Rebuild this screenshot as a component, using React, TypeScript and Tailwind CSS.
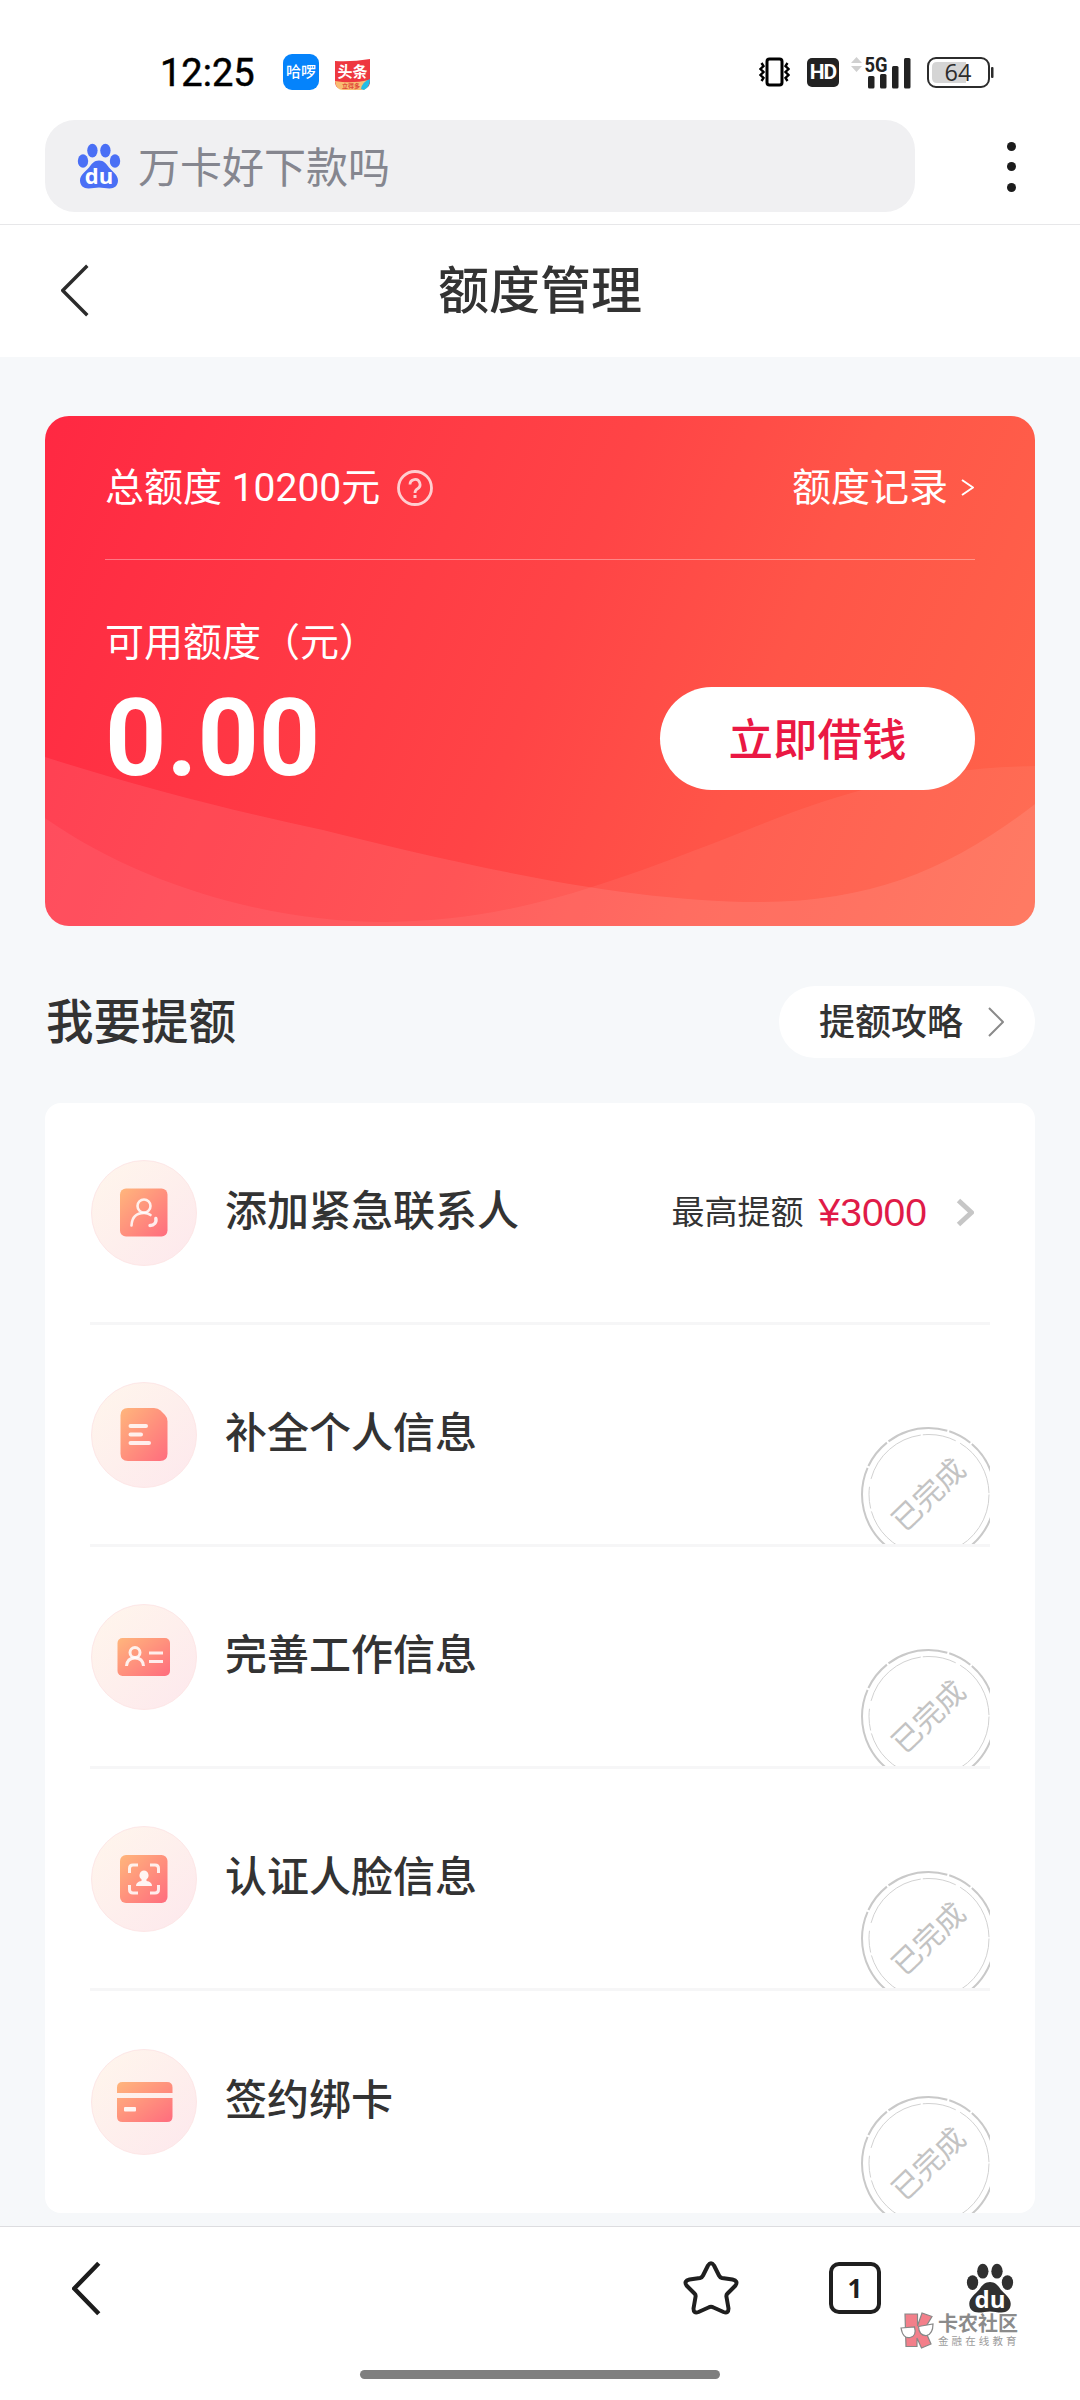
import type { ReactNode } from 'react';

function Paw({ size, color }: { size: number; color: string }) {
  return (
    <svg width={size} height={size} viewBox="0 0 44 44" className="shrink-0 overflow-visible">
      <g fill={color}>
        <ellipse cx="6" cy="17" rx="5.2" ry="6.8" />
        <ellipse cx="15.4" cy="6.6" rx="5.2" ry="6.8" />
        <ellipse cx="28.4" cy="6.6" rx="5.2" ry="6.8" />
        <ellipse cx="38" cy="17" rx="5.2" ry="6.8" />
        <path d="M22 16.500c5 0 7.500 3.500 10 7 3.500 4 9 7.500 9 13 0 5-3.500 8-8.500 8-4 0-7-1-10.500-1s-6.500 1-10.500 1c-5 0-8.500-3-8.500-8 0-5.500 5.500-9 9-13 2.500-3.500 5-7 10-7z" />
      </g>
      <text x="22" y="40" textAnchor="middle" fontSize="22" fontWeight="700" fill="#fff" fontFamily="Open Sans, sans-serif">
        du
      </text>
    </svg>
  );
}

function Chevron({ w, h, stroke, className, left }: { w: number; h: number; stroke: number; className?: string; left?: boolean }) {
  const p = stroke / 2;
  const points = left ? `${w - p},${p} ${p},${h / 2} ${w - p},${h - p}` : `${p},${p} ${w - p},${h / 2} ${p},${h - p}`;
  return (
    <svg width={w} height={h} className={className}>
      <polyline points={points} fill="none" stroke="currentColor" strokeWidth={stroke} strokeLinejoin="round" />
    </svg>
  );
}

function StatusBar() {
  return (
    <div className="flex h-[120px] items-center pl-[160px] pr-[86px] pt-6">
      <span className="w-[123px] pt-0.5 text-[38px] leading-none text-black [-webkit-text-stroke:0.5px_#000]">12:25</span>
      <span className="flex h-9 w-9 items-center justify-center whitespace-nowrap rounded-[9px] bg-[#0583fb] text-[15px] font-medium leading-none text-white">
        哈啰
      </span>
      <svg width="37" height="32" viewBox="0 0 37 32" className="ml-[15px] mt-[5px]">
        <path d="M1 2Q18 3 36 0V24Q35 30 27 30H9Q2 30 1 24z" fill="#ee3840" />
        <path d="M1 22Q18 25 35 21Q35 31 27 31H9Q2 31 1 22z" fill="#f8bd72" />
        <path d="M27 30Q28 23 36 20Q36 28 30 31z" fill="#22bde6" />
        <text x="18.500" y="18" textAnchor="middle" fontSize="15" fontWeight="700" fill="#fff">
          头条
        </text>
        <text x="17" y="29" textAnchor="middle" fontSize="6" fontWeight="700" fill="#e0483a">
          立得多
        </text>
      </svg>

      <svg width="31" height="30" viewBox="0 0 31 30" className="ml-auto" fill="none" stroke="#000">
        <rect x="8" y="2" width="15" height="26" rx="2.500" strokeWidth="3" />
        <path d="M2.500 6l2 3-3 3 3 3-3 3 3 3-2 3M28.500 6l-2 3 3 3-3 3 3 3-3 3 2 3" strokeWidth="2.400" />
      </svg>
      <span className="ml-[17px] flex h-[29px] w-8 items-center justify-center rounded-[5px] bg-[#222] font-['Roboto'] text-[21px] font-bold leading-none tracking-[-1px] text-white">
        HD
      </span>
      <svg width="61" height="33" viewBox="0 0 61 33" className="ml-3 overflow-visible">
        <path d="M0 6l5.500-6 5.500 6zM0 9h11l-5.500 6z" fill="#d0d0d0" transform="translate(0 1)" />
        <text x="13.500" y="15.500" fontSize="21" fontWeight="700" fill="#222" textLength="23" lengthAdjust="spacingAndGlyphs" fontFamily="Roboto">
          5G
        </text>
        <g fill="#222">
          <rect x="17" y="20" width="6.500" height="12.500" rx="1.500" />
          <rect x="29" y="18" width="6.500" height="14.500" rx="1.500" />
          <rect x="41" y="10" width="6.500" height="22.500" rx="1.500" />
          <rect x="53" y="2" width="6.500" height="30.500" rx="1.500" />
        </g>
      </svg>
      <svg width="67" height="31" viewBox="0 0 67 31" className="ml-[15px] overflow-visible">
        <rect x="1" y="1" width="61" height="29" rx="8" fill="#fff" stroke="#2c2c2c" strokeWidth="2" />
        <path d="M10 5H39V26H10Q5 26 5 21V10Q5 5 10 5z" fill="#d5d5d5" />
        <rect x="64" y="10" width="2.500" height="11" rx="1" fill="#2c2c2c" />
        <text x="31" y="24" textAnchor="middle" fontSize="23.500" fill="#2c2c2c" fontFamily="Open Sans">
          64
        </text>
      </svg>
    </div>
  );
}

function SearchBar() {
  return (
    <div className="flex h-[105px] items-start border-b border-[#e7e7e9] pl-[45px]">
      <div className="flex h-[92px] w-[870px] items-center rounded-[30px] bg-[#f0f0f2] pl-8">
        <Paw size={44} color="#4a6ff5" />
        <span className="ml-[17px] pt-1.5 text-[42px] leading-none text-[#85868f]">万卡好下款吗</span>
      </div>
      <div className="ml-[92px] flex flex-col gap-[11.5px] pt-[21.5px]">
        <i className="h-[9px] w-[9px] rounded-full bg-[#1c1c1c]" />
        <i className="h-[9px] w-[9px] rounded-full bg-[#1c1c1c]" />
        <i className="h-[9px] w-[9px] rounded-full bg-[#1c1c1c]" />
      </div>
    </div>
  );
}

function QuotaCard() {
  return (
    <section className="relative h-[510px] overflow-hidden rounded-[24px] bg-[linear-gradient(112deg,#ff2842_0%,#ff4446_50%,#ff5548_70%,#ff654a_100%)] px-[60px] text-white">
      <svg width="990" height="510" className="absolute left-0 top-0" fill="#fff" fillOpacity="0.09">
        <path d="M0 341C100 373 190 395 278 414C400 444 570 486 715 486C830 486 910 450 990 388V510H0z" />
        <path d="M0 402C100 472 230 506 340 506C460 504 540 478 702 414C800 374 880 352 990 350V510H0z" fillOpacity="0.06" />
      </svg>
      <div className="relative flex h-36 items-center border-b border-white/35 text-[39px] leading-none">
        <span className="pt-0.5">总额度 10200元</span>
        <svg width="38" height="38" viewBox="0 0 38 38" className="ml-4" fill="none" stroke="#fff" strokeWidth="2.800" opacity="0.75">
          <circle cx="19" cy="19" r="16.500" />
          <path d="M14 15.500a5 5 0 1 1 7.300 4.400C19.500 21 19 21.800 19 24" />
          <path d="M19 26v3" strokeWidth="3" />
        </svg>
        <span className="ml-auto pt-0.5">额度记录</span>
        <Chevron w={13} h={17} stroke={2} className="ml-[13px] mr-px" />
      </div>
      <div className="relative flex justify-between">
        <div className="pt-[64px]">
          <div className="text-[39px] leading-none">可用额度（元）</div>
          <div className="mt-[22px] text-[107px] font-bold leading-[108px]">0.00</div>
        </div>
        <button className="mt-[127px] h-[103px] w-[315px] rounded-full bg-white pt-[5px] text-[44.5px] font-medium leading-none text-[#ea1843]">
          立即借钱
        </button>
      </div>
    </section>
  );
}

function Badge({ children }: { children: ReactNode }) {
  return (
    <svg width="110" height="110" viewBox="0 0 110 110" className="-ml-px shrink-0">
      <circle cx="55" cy="55" r="52.500" fill="url(#badge-bg)" stroke="#fde7e7" />
      {children}
    </svg>
  );
}

const line = { fill: 'none', stroke: '#fff', strokeOpacity: 0.85, strokeWidth: 3 };

const items: { title: string; bonus?: string; icon: ReactNode }[] = [
  {
    title: '添加紧急联系人',
    bonus: '¥3000',
    icon: (
      <>
        <rect x="31" y="30.500" width="47.500" height="48" rx="6" fill="url(#badge-fg)" />
        <g {...line} strokeWidth="2.600" strokeLinecap="round">
          <circle cx="55" cy="48" r="6.500" />
          <path d="M42.500 67.500C43 58.500 48 55 55 55c2.600 0 4.800.6 6.500 2" />
          <path d="M66.800 60.500c1 4-1.800 7-5.800 7" strokeWidth="3.400" />
        </g>
      </>
    ),
  },
  {
    title: '补全个人信息',
    icon: (
      <>
        <path d="M39 28H65Q69 28 71.500 30.500L76 35Q78.500 37.500 78.500 41.500V73.500Q78.500 81 71 81H39Q31.500 81 31.500 73.500V35.500Q31.500 28 39 28z" fill="url(#badge-fg)" />
        <path d="M41.500 46H57M41.500 54.500H52M41.500 63H60" {...line} strokeWidth="4" strokeLinecap="round" />
      </>
    ),
  },
  {
    title: '完善工作信息',
    icon: (
      <>
        <rect x="28.500" y="36" width="52.500" height="38" rx="5" fill="url(#badge-fg)" />
        <g {...line}>
          <circle cx="46" cy="50.500" r="5" />
          <path d="M37.500 64C38 58 41.500 56 46 56s8 2 8.500 8M60 51h14M60 59.500h14" />
        </g>
      </>
    ),
  },
  {
    title: '认证人脸信息',
    icon: (
      <>
        <rect x="31" y="31" width="47.500" height="48" rx="6" fill="url(#badge-fg)" />
        <path d="M40.500 49V44.500Q40.500 41 44 41H49M61 41h5Q69.500 41 69.500 44.500V49M69.500 61v4.500Q69.500 69 66 69H61M49 69H44Q40.500 69 40.500 65.500V61" {...line} />
        <path d="M55 46.500a4.800 4.800 0 0 1 2.500 8.700v1.800q5.500.8 5.500 5H47q0-4.200 5.500-5v-1.800A4.800 4.800 0 0 1 55 46.500z" fill="#fff" fillOpacity="0.9" />
      </>
    ),
  },
  {
    title: '签约绑卡',
    icon: (
      <>
        <path d="M28 46V40.500Q28 35 33.500 35H78Q83.500 35 83.500 40.500V46zM28 51H83.500V69.500Q83.500 75 78 75H33.500Q28 75 28 69.500z" fill="url(#badge-fg)" />
        <rect x="35" y="60" width="12" height="4.500" rx="1" fill="#fff" fillOpacity="0.9" />
      </>
    ),
  },
];

// "done" seal, cut off by the right and bottom edges of its row
function Stamp() {
  return (
    <svg width="129" height="117" viewBox="0 0 129 117" className="self-end">
      <circle cx="67.500" cy="67.500" r="66.500" fill="none" stroke="#c9c9c9" strokeWidth="2" strokeDasharray="62 2 24 2 41 4 8 3 90 2 30 2" />
      <circle cx="68" cy="67.500" r="60" fill="none" stroke="#d2d2d2" strokeWidth="1" strokeDasharray="70 2 34 5 60 3 22 8" />
      <text x="67" y="78" textAnchor="middle" fontSize="29.500" fill="#c3c3c3" transform="rotate(-44 68 67)">
        已完成
      </text>
    </svg>
  );
}

function BottomBar() {
  return (
    <footer className="relative flex flex-1 flex-col border-t border-[#dddde0] bg-white">
      <div className="flex h-[122px] items-center pl-[72px] pr-[66px]">
        <Chevron w={29} h={55} stroke={4.5} left className="text-[#1c1c1c]" />
        <svg width="56" height="54" viewBox="0 0 56 54" className="ml-auto">
          <path
            d="M25 4.500Q28 0 31 4.500L36 14.500Q37 16.500 39 17L49.500 18.500Q55.500 20 52.500 24.500L44.500 32.500Q43 34 43.500 36L45.500 47.500Q45.500 53 40.500 51L30.500 46.500Q28 45 25.500 46.500L15.500 51Q10.500 53 10.500 47.500L12.500 36Q13 34 11.500 32.500L3.500 24.500Q.5 20 6.500 18.500L17 17Q19 16.500 20 14.500z"
            fill="none"
            stroke="#1f1f1f"
            strokeWidth="4"
            strokeLinejoin="round"
          />
        </svg>
        <span className="ml-[90px] flex h-[52px] w-[52px] items-center justify-center rounded-[10px] border-[4px] border-[#1f1f1f] font-['Open_Sans'] text-[26px] font-bold leading-none text-[#1f1f1f]">
          1
        </span>
        <span className="ml-[85px]">
          <Paw size={48} color="#303030" />
        </span>
      </div>
      <div className="mx-auto mt-[21px] h-[9px] w-[360px] rounded-full bg-[#7f7f7f]" />

      <div className="absolute left-[899px] top-[85px] flex items-center">
        <svg width="36" height="37" viewBox="0 0 36 37" stroke="#888" strokeWidth="1.200">
          <path d="M6 2H18.500V14L23 1L33 4.500L25.500 17L32 32L22.500 36L18 26V34.500H7z" fill="#f37f8a" />
          <path d="M2 16L15.500 15Q18 24 11 25.500Q4 27 2 16zM19.500 14.500L34 12Q34 22 27.500 23.500Q20 24 19.500 14.500z" fill="#fff" />
        </svg>
        <div className="ml-[3px] whitespace-nowrap">
          <div className="text-[20px] font-bold leading-[22px] text-[#8b8b8b]">卡农社区</div>
          <div className="text-[10.5px] leading-[14px] tracking-[3.1px] text-[#9c9c9c]">金融在线教育</div>
        </div>
      </div>
    </footer>
  );
}

export default function App() {
  return (
    <div className="flex h-[2400px] w-[1080px] flex-col overflow-hidden bg-[#f6f8fa] font-['Roboto','Noto_Sans_CJK_SC',sans-serif] text-[#333]">
      <svg width="0" height="0" className="absolute">
        <defs>
          <linearGradient id="badge-bg" x1="0" y1="0" x2="1" y2="1">
            <stop offset="0" stopColor="#fff6ec" />
            <stop offset="1" stopColor="#fde8ed" />
          </linearGradient>
          <linearGradient id="badge-fg" x1="0" y1="0" x2="1" y2="1">
            <stop offset="0" stopColor="#ffb67c" />
            <stop offset="1" stopColor="#ff6c7e" />
          </linearGradient>
        </defs>
      </svg>

      <header className="bg-white">
        <StatusBar />
        <SearchBar />
        <div className="flex h-[132px] items-center pl-[61px]">
          <Chevron w={28} h={53} stroke={3.4} left className="mb-0.5 text-[#2b2b2b]" />
          <h1 className="ml-[349px] pt-px text-[51px] font-medium leading-none">额度管理</h1>
        </div>
      </header>

      <main className="px-[45px] pt-[59px]">
        <QuotaCard />

        <div className="mt-[60px] flex h-[72px] items-center justify-between">
          <h2 className="ml-px pt-1 text-[47.5px] font-medium leading-none">我要提额</h2>
          <div className="flex h-[72px] w-64 items-center rounded-full bg-white pl-10">
            <span className="pt-px text-[36px] font-medium leading-none">提额攻略</span>
            <Chevron w={16} h={30} stroke={2} className="ml-[25px] text-[#8a8a8a]" />
          </div>
        </div>

        <ul className="mt-[45px] rounded-[16px] bg-white px-[45px]">
          {items.map((item) => (
            <li key={item.title} className="flex h-[222px] items-center border-b-[3px] border-[#f6f6f7] last:border-b-0">
              <Badge>{item.icon}</Badge>
              <span className="ml-[26px] mr-auto pb-0.5 text-[42px] font-medium leading-none">{item.title}</span>
              {item.bonus ? (
                <>
                  <span className="text-[33px] leading-none">最高提额</span>
                  <span className="ml-[15px] font-['Liberation_Sans'] text-[39px] leading-none text-[#e01b48]">{item.bonus}</span>
                  <Chevron w={18} h={29} stroke={5} className="ml-[29px] mr-[16px] text-[#c6c6c6]" />
                </>
              ) : (
                <Stamp />
              )}
            </li>
          ))}
        </ul>
      </main>

      <div className="h-[13px] shrink-0" />
      <BottomBar />
    </div>
  );
}
